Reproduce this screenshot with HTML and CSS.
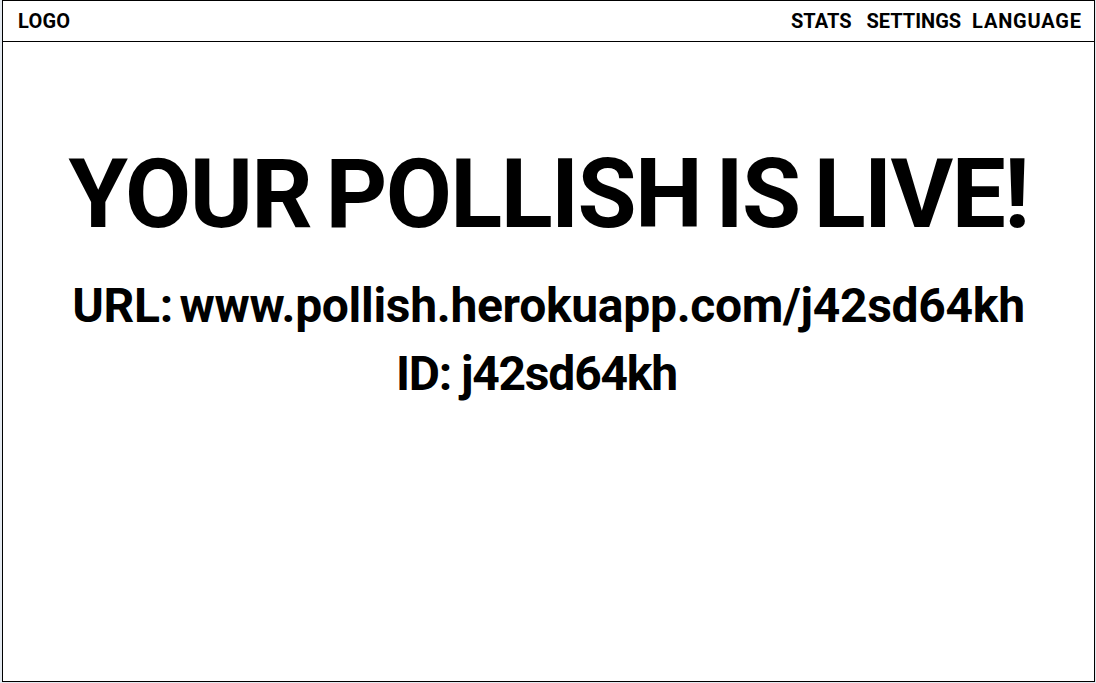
FILE: index.html
```html
<!DOCTYPE html>
<html>
<head>
<meta charset="utf-8">
<link rel="stylesheet" href="styles.css">
</head>
<body>
<div class="frame">
  <header class="topbar">
    <div class="logo">LOGO</div>
    <nav class="nav">
      <span class="nav-item stats">STATS</span>
      <span class="nav-item settings">SETTINGS</span>
      <span class="nav-item language">LANGUAGE</span>
    </nav>
  </header>
  <main class="content">
    <h1 class="title">YOUR POLLISH IS LIVE!</h1>
    <p class="url">URL: www.pollish.herokuapp.com/j42sd64kh</p>
    <p class="id">ID: j42sd64kh</p>
  </main>
</div>
</body>
</html>
```
FILE: styles.css
```css
html, body {
  margin: 0;
  padding: 0;
  background: #e3e9f0;
}
body {
  font-family: Roboto, "DejaVu Sans", sans-serif;
  font-weight: 700;
  color: #000;
}
.frame {
  box-sizing: border-box;
  margin-left: 2px;
  width: 1093px;
  height: 682px;
  border: 1px solid #000;
  background: #fff;
  display: flex;
  flex-direction: column;
}
.topbar {
  box-sizing: border-box;
  height: 41px;
  border-bottom: 1px solid #000;
  display: flex;
  justify-content: space-between;
  align-items: center;
  padding: 0 13px 0 15px;
  font-size: 20px;
}
.logo {
  letter-spacing: 0.2px;
}
.nav {
  display: flex;
  gap: 11px;
}
.nav-item {
  letter-spacing: 0;
}
.nav .stats { margin-right: 4px; }
.nav .language {
  letter-spacing: 0.8px;
  margin-right: -0.8px;
}
.content {
  display: flex;
  flex-direction: column;
  align-items: center;
  padding-top: 97px;
}
.title {
  margin: 0;
  font-size: 96px;
  line-height: 110px;
  font-weight: 700;
  letter-spacing: -1.6px;
  word-spacing: -8px;
}
.url, .id {
  margin: 0;
  font-size: 48px;
  line-height: 70px;
  letter-spacing: -0.3px;
  word-spacing: -5px;
}
.url {
  margin-top: 22px;
}
.id {
  margin-top: -2px;
  margin-right: 24px;
  letter-spacing: -1.2px;
  word-spacing: -1px;
}
```
